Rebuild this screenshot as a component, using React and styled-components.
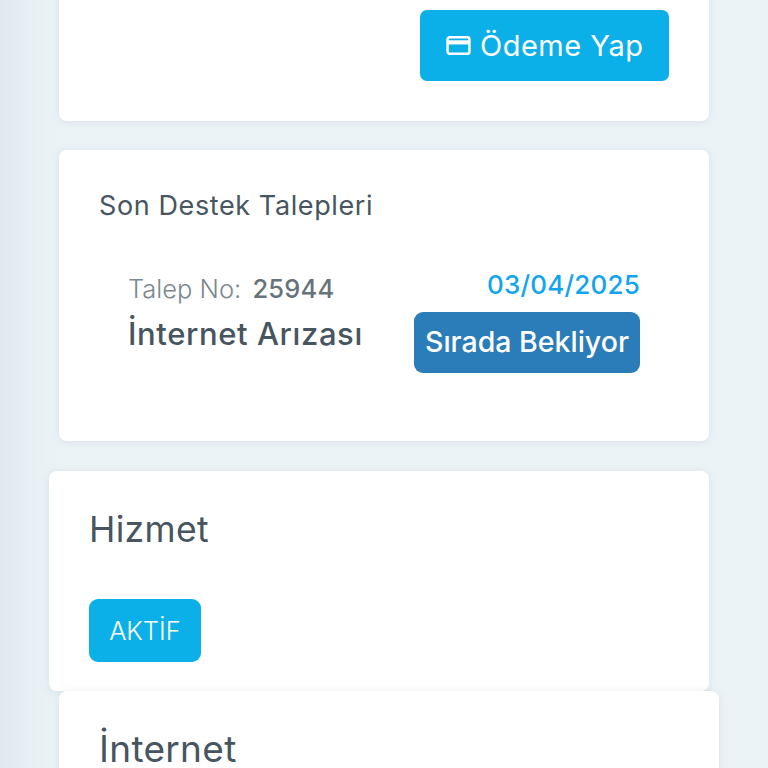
import React from 'react';
import styled, { createGlobalStyle } from 'styled-components';

const Global = createGlobalStyle`
  html, body { margin: 0; padding: 0; }
  body { font-family: Inter, "Noto Sans", sans-serif; background: #ecf3f7; }
`;

const Page = styled.div`
  width: 768px;
  height: 768px;
  overflow: hidden;
  box-sizing: border-box;
  padding-right: 59px;
  background: linear-gradient(90deg, #dfe9ed 0, #e6eff3 25px, #ecf3f7 60px);
  display: flex;
  flex-direction: column;
  align-items: flex-end;
`;

const Card = styled.section`
  box-sizing: border-box;
  flex: none;
  background: #fff;
  border-radius: 8px;
  box-shadow: 0 1px 8px rgba(120, 140, 155, 0.16);
  width: ${p => p.$width || 650}px;
  height: ${p => p.$height}px;
  margin-top: ${p => p.$top || 0}px;
  margin-right: ${p => p.$shift || 0}px;
  padding: ${p => p.$padding || 0};
`;

const PayCard = styled(Card)`
  display: flex;
  justify-content: flex-end;
  align-items: flex-start;
`;

const PayButton = styled.button`
  box-sizing: border-box;
  width: 249px;
  height: 71px;
  border: 0;
  border-radius: 7px;
  background: #0cb0e8;
  color: #fff;
  font: 400 29px Inter, sans-serif;
  letter-spacing: 0.5px;
  display: flex;
  align-items: center;
  justify-content: flex-start;
  gap: 9px;
  padding: 0 0 0 26px;
`;

const CardTitle = styled.h2`
  margin: 0;
  padding-top: 1px;
  font-weight: 400;
  font-size: 27px;
  line-height: 32px;
  letter-spacing: 0.6px;
  color: #46555f;
`;

const Ticket = styled.div`
  display: flex;
  justify-content: space-between;
  margin-top: 48px;
  padding: 0 29px 0 29px;
`;

const TicketInfo = styled.div`
  display: flex;
  flex-direction: column;
  padding-top: 4px;
`;

const TicketNo = styled.div`
  font-size: 25.5px;
  line-height: 30px;
  color: #7c878e;
  font-weight: 300;
  letter-spacing: 0;
  strong { font-weight: 500; color: #66737b; letter-spacing: 0.2px; margin-left: 4px; }
`;

const TicketName = styled.div`
  margin-top: 12px;
  font-size: 31px;
  line-height: 36px;
  font-weight: 500;
  letter-spacing: 0.6px;
  color: #46555f;
`;

const TicketSide = styled.div`
  display: flex;
  flex-direction: column;
  align-items: flex-end;
  gap: 12px;
`;

const TicketDate = styled.div`
  font-size: 26px;
  line-height: 30px;
  font-weight: 500;
  letter-spacing: 0.2px;
  color: #10a5ee;
`;

const StatusBadge = styled.div`
  box-sizing: border-box;
  width: 226px;
  height: 61px;
  padding-bottom: 2px;
  border-radius: 9px;
  background: #2b7db9;
  color: #fff;
  font-size: 28.5px;
  font-weight: 500;
  display: flex;
  align-items: center;
  justify-content: center;
`;

const ServiceTitle = styled.h1`
  margin: 0;
  padding-top: 1px;
  font-weight: 400;
  font-size: 35.5px;
  line-height: 41px;
  letter-spacing: 0.3px;
  color: #46555f;
`;

const NameTitle = styled(ServiceTitle)`
  font-size: 37px;
  line-height: 38px;
  padding-top: 2px;
`;

const ActiveBadge = styled.div`
  margin-top: 49px;
  width: 112px;
  height: 63px;
  border-radius: 9px;
  background: #0cb0e8;
  color: #fff;
  font-size: 25.5px;
  font-weight: 300;
  display: flex;
  align-items: center;
  justify-content: center;
`;

const CardIcon = () => (
  <svg width="25" height="25" viewBox="0 0 24 24" fill="none" stroke="#fff" strokeWidth="2.4" aria-hidden="true">
    <rect x="1.5" y="4" width="21" height="16" rx="2" />
    <path d="M1.5 9h21" strokeWidth="4" />
  </svg>
);

export default function App() {
  return (
    <>
      <Global />
      <Page>
        <PayCard $height={133} $top={-12} $padding="22px 40px 0 0">
          <PayButton><CardIcon />Ödeme Yap</PayButton>
        </PayCard>
        <Card $height={291} $top={29} $padding="39px 40px 0">
          <CardTitle>Son Destek Talepleri</CardTitle>
          <Ticket>
            <TicketInfo>
              <TicketNo>Talep No: <strong>25944</strong></TicketNo>
              <TicketName>İnternet Arızası</TicketName>
            </TicketInfo>
            <TicketSide>
              <TicketDate>03/04/2025</TicketDate>
              <StatusBadge>Sırada Bekliyor</StatusBadge>
            </TicketSide>
          </Ticket>
        </Card>
        <Card $width={660} $height={220} $top={30} $padding="37px 40px 0">
          <ServiceTitle>Hizmet</ServiceTitle>
          <ActiveBadge>AKTİF</ActiveBadge>
        </Card>
        <Card $width={660} $height={120} $shift={-10} $padding="37px 40px 0">
          <NameTitle>İnternet</NameTitle>
        </Card>
      </Page>
    </>
  );
}
